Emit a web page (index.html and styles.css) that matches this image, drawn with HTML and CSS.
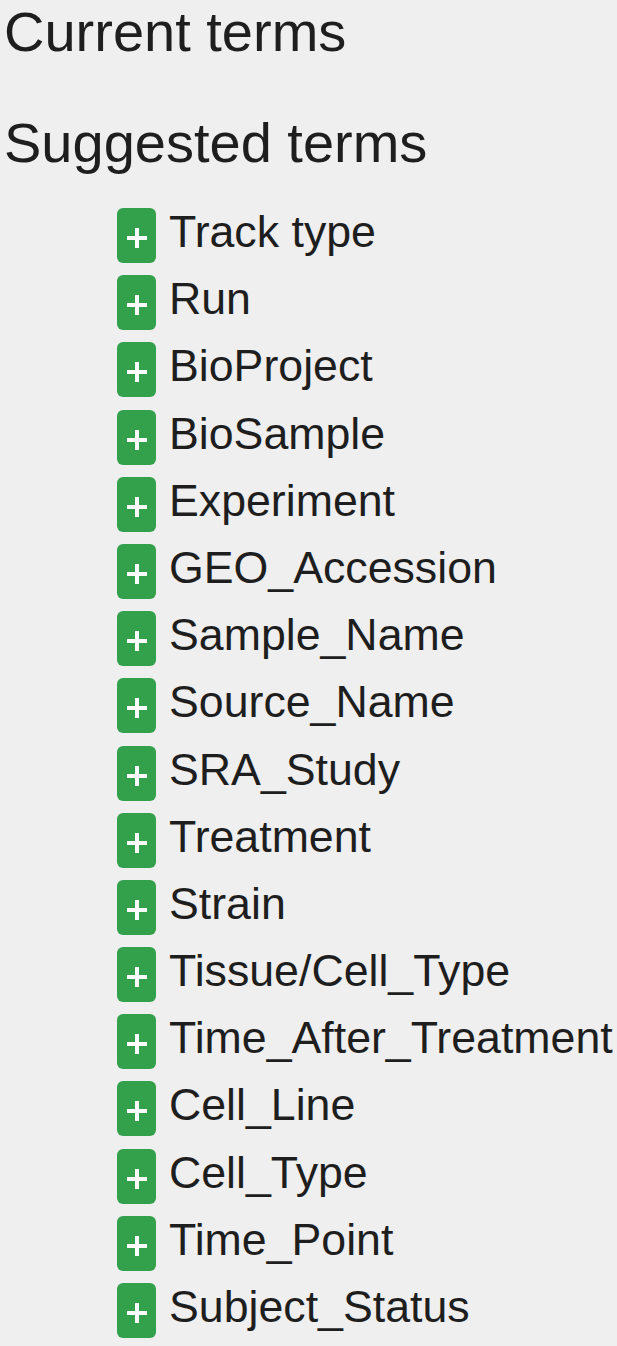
FILE: index.html
```html
<!DOCTYPE html>
<html>
<head>
<meta charset="utf-8">
<link rel="stylesheet" href="styles.css">
</head>
<body>
<div class="page">
  <h2 class="heading heading-current">Current terms</h2>
  <h2 class="heading heading-suggested">Suggested terms</h2>
  <ul class="terms">
    <li class="term"><span class="add-btn"><svg viewBox="0 0 20 20" width="20" height="20"><path d="M10 0V20M0 10H20" stroke="#fff" stroke-width="4"/></svg></span><span class="term-name">Track type</span></li>
    <li class="term"><span class="add-btn"><svg viewBox="0 0 20 20" width="20" height="20"><path d="M10 0V20M0 10H20" stroke="#fff" stroke-width="4"/></svg></span><span class="term-name">Run</span></li>
    <li class="term"><span class="add-btn"><svg viewBox="0 0 20 20" width="20" height="20"><path d="M10 0V20M0 10H20" stroke="#fff" stroke-width="4"/></svg></span><span class="term-name">BioProject</span></li>
    <li class="term"><span class="add-btn"><svg viewBox="0 0 20 20" width="20" height="20"><path d="M10 0V20M0 10H20" stroke="#fff" stroke-width="4"/></svg></span><span class="term-name">BioSample</span></li>
    <li class="term"><span class="add-btn"><svg viewBox="0 0 20 20" width="20" height="20"><path d="M10 0V20M0 10H20" stroke="#fff" stroke-width="4"/></svg></span><span class="term-name">Experiment</span></li>
    <li class="term"><span class="add-btn"><svg viewBox="0 0 20 20" width="20" height="20"><path d="M10 0V20M0 10H20" stroke="#fff" stroke-width="4"/></svg></span><span class="term-name">GEO_Accession</span></li>
    <li class="term"><span class="add-btn"><svg viewBox="0 0 20 20" width="20" height="20"><path d="M10 0V20M0 10H20" stroke="#fff" stroke-width="4"/></svg></span><span class="term-name">Sample_Name</span></li>
    <li class="term"><span class="add-btn"><svg viewBox="0 0 20 20" width="20" height="20"><path d="M10 0V20M0 10H20" stroke="#fff" stroke-width="4"/></svg></span><span class="term-name">Source_Name</span></li>
    <li class="term"><span class="add-btn"><svg viewBox="0 0 20 20" width="20" height="20"><path d="M10 0V20M0 10H20" stroke="#fff" stroke-width="4"/></svg></span><span class="term-name">SRA_Study</span></li>
    <li class="term"><span class="add-btn"><svg viewBox="0 0 20 20" width="20" height="20"><path d="M10 0V20M0 10H20" stroke="#fff" stroke-width="4"/></svg></span><span class="term-name">Treatment</span></li>
    <li class="term"><span class="add-btn"><svg viewBox="0 0 20 20" width="20" height="20"><path d="M10 0V20M0 10H20" stroke="#fff" stroke-width="4"/></svg></span><span class="term-name">Strain</span></li>
    <li class="term"><span class="add-btn"><svg viewBox="0 0 20 20" width="20" height="20"><path d="M10 0V20M0 10H20" stroke="#fff" stroke-width="4"/></svg></span><span class="term-name">Tissue/Cell_Type</span></li>
    <li class="term"><span class="add-btn"><svg viewBox="0 0 20 20" width="20" height="20"><path d="M10 0V20M0 10H20" stroke="#fff" stroke-width="4"/></svg></span><span class="term-name">Time_After_Treatment</span></li>
    <li class="term"><span class="add-btn"><svg viewBox="0 0 20 20" width="20" height="20"><path d="M10 0V20M0 10H20" stroke="#fff" stroke-width="4"/></svg></span><span class="term-name">Cell_Line</span></li>
    <li class="term"><span class="add-btn"><svg viewBox="0 0 20 20" width="20" height="20"><path d="M10 0V20M0 10H20" stroke="#fff" stroke-width="4"/></svg></span><span class="term-name">Cell_Type</span></li>
    <li class="term"><span class="add-btn"><svg viewBox="0 0 20 20" width="20" height="20"><path d="M10 0V20M0 10H20" stroke="#fff" stroke-width="4"/></svg></span><span class="term-name">Time_Point</span></li>
    <li class="term"><span class="add-btn"><svg viewBox="0 0 20 20" width="20" height="20"><path d="M10 0V20M0 10H20" stroke="#fff" stroke-width="4"/></svg></span><span class="term-name">Subject_Status</span></li>
  </ul>
</div>
</body>
</html>
```

FILE: styles.css
```css
html, body {
  margin: 0;
  padding: 0;
  background: #efefef;
}
body {
  font-family: "Liberation Sans", Arial, Helvetica, sans-serif;
  color: #1e1e1e;
  overflow: hidden;
}
.page {
  padding-left: 4px;
}
.heading {
  margin: 0;
  font-weight: normal;
  font-size: 56px;
  line-height: 64px;
}
.heading-current {
  margin-bottom: 47px;
}
.heading-suggested {
  margin-bottom: 33px;
}
.terms {
  list-style: none;
  margin: 0;
  padding: 0 0 0 113px;
  display: flex;
  flex-direction: column;
  gap: 12.2px;
}
.term {
  display: flex;
  align-items: flex-start;
  height: 55px;
  white-space: nowrap;
}
.add-btn {
  flex: none;
  width: 39px;
  height: 55px;
  border-radius: 6px;
  background: #33a04b;
  display: flex;
  align-items: center;
  justify-content: center;
  padding-top: 5px;
  box-sizing: border-box;
}
.add-btn svg {
  display: block;
}
.term-name {
  margin-left: 13px;
  font-size: 44.7px;
  line-height: normal;
  margin-top: -1px;
}
```
